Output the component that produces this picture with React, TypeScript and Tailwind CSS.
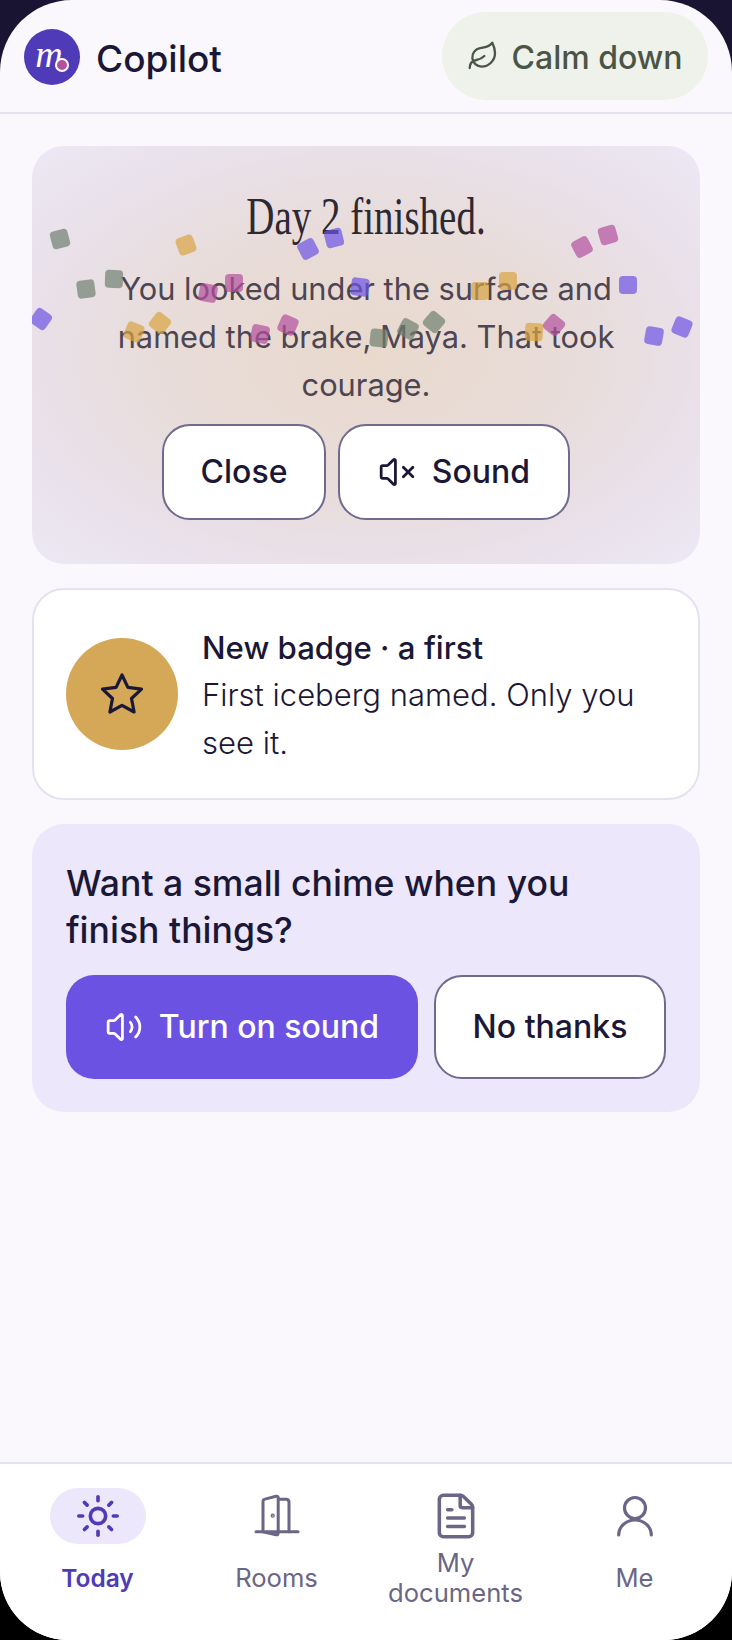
import { Leaf, FileText, Sun, Volume2, VolumeX } from 'lucide-react';

const confetti = [
  'left-[19px] top-[84px] rotate-[-15deg] bg-[#6f8070]',
  'left-[145px] top-[90px] rotate-[-20deg] bg-[#d9a441]',
  'left-[267px] top-[94px] rotate-[-28deg] bg-[#6c52e2]',
  'left-[293px] top-[83px] rotate-[-14deg] bg-[#6c52e2]',
  'left-[45px] top-[134px] rotate-[-8deg] bg-[#6f8070]',
  'left-[73px] top-[124px] rotate-[2deg] bg-[#6f8070]',
  'left-[167px] top-[138px] rotate-[10deg] bg-[#b4509e]',
  'left-[193px] top-[128px] rotate-[0deg] bg-[#b4509e]',
  'left-[319px] top-[132px] rotate-[8deg] bg-[#6c52e2]',
  'left-[0px] top-[164px] rotate-[35deg] bg-[#6c52e2]',
  'left-[93px] top-[177px] rotate-[22deg] bg-[#d9a441]',
  'left-[119px] top-[168px] rotate-[38deg] bg-[#d9a441]',
  'left-[219px] top-[179px] rotate-[12deg] bg-[#b4509e]',
  'left-[247px] top-[170px] rotate-[24deg] bg-[#b4509e]',
  'left-[338px] top-[183px] rotate-[6deg] bg-[#6f8070]',
  'left-[367px] top-[174px] rotate-[28deg] bg-[#6f8070]',
  'left-[393px] top-[167px] rotate-[40deg] bg-[#6f8070]',
  'left-[439px] top-[136px] rotate-[0deg] bg-[#d9a441]',
  'left-[467px] top-[126px] rotate-[0deg] bg-[#d9a441]',
  'left-[493px] top-[177px] rotate-[4deg] bg-[#d9a441]',
  'left-[513px] top-[170px] rotate-[40deg] bg-[#b4509e]',
  'left-[541px] top-[92px] rotate-[-28deg] bg-[#b4509e]',
  'left-[567px] top-[80px] rotate-[-16deg] bg-[#b4509e]',
  'left-[587px] top-[130px] rotate-[0deg] bg-[#6c52e2]',
  'left-[613px] top-[181px] rotate-[10deg] bg-[#6c52e2]',
  'left-[641px] top-[172px] rotate-[22deg] bg-[#6c52e2]',
];

const DoorIcon = () => (
  <svg width="48" height="48" viewBox="0 0 48 48" fill="none" stroke="currentColor" strokeWidth="3" strokeLinecap="round" strokeLinejoin="round">
    <path d="M3 39.7h42" />
    <path d="M10 39.7V9.5q0-2 2-2.4L23 4.3q2.2-.4 2.2 1.7v35q0 2.2-2.2 1.7z" />
    <path d="M26 7.3h7q3 0 3 3v29.4" />
    <circle cx="19.7" cy="23.7" r=".6" fill="currentColor" />
  </svg>
);

const StarIcon = () => (
  <svg width="48" height="48" viewBox="0 0 48 48" fill="none" stroke="currentColor" strokeWidth="3.2" strokeLinejoin="round">
    <path d="M24 5l5.9 12.4 13.6 1.7-10 9.4 2.6 13.5-12.1-6.6-12.1 6.6 2.6-13.5-10-9.4 13.6-1.7z" />
  </svg>
);

const UserIcon = () => (
  <svg width="48" height="48" viewBox="0 0 48 48" fill="none" stroke="currentColor" strokeWidth="3.2" strokeLinecap="round">
    <circle cx="24" cy="16" r="10.5" />
    <path d="M7.7 43a16.3 15 0 0 1 32.6 0" />
  </svg>
);

const outlineButton =
  'flex items-center justify-center rounded-[28px] border-2 border-[#6f6a8e] bg-white text-[32px] font-[550] text-[#1b1736]';

interface NavItemProps {
  label: string;
  active?: boolean;
  children: React.ReactNode;
}

const NavItem = ({ label, active, children }: NavItemProps) => (
  <div className={`flex flex-col items-center ${active ? 'text-[#4f3bb8]' : 'text-[#6b6685]'}`}>
    <div className={`flex h-[56px] w-[96px] items-center justify-center rounded-full ${active ? 'bg-[#ece7fb]' : ''}`}>
      {children}
    </div>
    <div className={`mt-[4px] flex h-[60px] w-[150px] items-center justify-center text-center leading-[30px] ${active ? 'text-[24.5px] font-semibold' : 'text-[25.6px] font-normal'}`}>
      <span>{label}</span>
    </div>
  </div>
);

export default function App() {
  return (
    <div className="h-[1640px] w-[732px] overflow-hidden bg-[linear-gradient(#1a1433_50%,#000_50%)] font-['Inter',sans-serif]">
      <div className="flex h-full flex-col overflow-hidden rounded-t-[72px] rounded-b-[68px] bg-[#faf8fd]">
        <header className="flex h-[114px] shrink-0 items-start justify-between border-b-2 border-[#e4e2f0] px-[24px] pt-[12px]">
          <div className="flex items-center gap-[16px] pt-[16px]">
            <div className="relative flex h-[56px] w-[56px] items-center justify-center rounded-full bg-[#4f3bb8]">
              <span className="font-['Liberation_Serif',serif] text-[38px] italic leading-none text-white -translate-y-[3px] -translate-x-[3px]">m</span>
              <span className="absolute left-[31px] top-[29px] h-[14px] w-[14px] rounded-full border-2 border-white bg-[#b4509e]" />
            </div>
            <span className="pt-[3px] text-[37px] font-[550] text-[#1b1736]">Copilot</span>
          </div>
          <div className="flex h-[88px] w-[266px] items-center justify-center gap-[12px] rounded-full bg-[#eef2ea] text-[32px] font-[450] text-[#4a5546]">
            <Leaf size={32} strokeWidth={1.75} />
            <span className="pt-[3px]">Calm down</span>
          </div>
        </header>

        <main className="flex flex-1 flex-col gap-[24px] px-[32px] pt-[32px]">
          <section className="relative h-[418px] overflow-hidden rounded-[32px] bg-[radial-gradient(ellipse_at_center,#e9d9cd_0%,#e8dcd8_40%,#e9e0e8_70%,#ece8f5_100%)] pt-[43px] text-center">
            <h1 className="h-[56px] scale-x-[.75] font-['Liberation_Serif',serif] text-[52px] leading-[56px] text-[#2e2833]">Day 2 finished.</h1>
            <p className="mx-auto mt-[20px] w-[540px] text-[30.8px] font-[380] leading-[48px] text-[#4d4552]">
              You looked under the surface and named the brake, Maya. That took courage.
            </p>
            <div className="mt-[15px] flex justify-center gap-[12px]">
              <button type="button" className={`${outlineButton} h-[96px] w-[164px]`}>Close</button>
              <button type="button" className={`${outlineButton} h-[96px] w-[232px] gap-[16px]`}>
                <VolumeX size={38} strokeWidth={1.75} />
                Sound
              </button>
            </div>
            {confetti.map((piece) => (
              <span key={piece} className={`absolute h-[18px] w-[18px] rounded-[4px] opacity-70 ${piece}`} />
            ))}
          </section>

          <section className="flex h-[212px] items-center gap-[24px] rounded-[32px] border-2 border-[#e4e2f0] bg-white pl-[32px] pr-[24px]">
            <div className="flex h-[112px] w-[112px] shrink-0 items-center justify-center rounded-full bg-[#d4a857] text-[#1b1736]">
              <StarIcon />
            </div>
            <div className="mt-[3px] text-[#1b1736]">
              <p className="text-[31.2px] font-[550] leading-[46px]">New badge · a first</p>
              <p className="text-[31px] font-[350] leading-[48px]">First iceberg named. Only you see it.</p>
            </div>
          </section>

          <section className="h-[288px] rounded-[32px] bg-[#ece7fb] px-[34px] pt-[36px]">
            <h2 className="w-[540px] text-[35.6px] font-[550] leading-[47px] text-[#1b1736]">Want a small chime when you finish things?</h2>
            <div className="mt-[21px] flex gap-[16px]">
              <button type="button" className="flex h-[104px] w-[352px] items-center justify-center gap-[16px] rounded-[28px] bg-[#6c52e2] text-[32px] font-[450] text-white">
                <Volume2 size={38} strokeWidth={1.75} />
                Turn on sound
              </button>
              <button type="button" className={`${outlineButton} h-[104px] w-[232px]`}>No thanks</button>
            </div>
          </section>
        </main>

        <nav className="grid h-[178px] shrink-0 grid-cols-4 border-t-2 border-[#e4e2f0] bg-white px-[8px] pt-[24px]">
          <NavItem label="Today" active><Sun size={46} strokeWidth={1.9} /></NavItem>
          <NavItem label="Rooms"><DoorIcon /></NavItem>
          <NavItem label="My documents"><FileText size={50} strokeWidth={1.7} /></NavItem>
          <NavItem label="Me"><UserIcon /></NavItem>
        </nav>
      </div>
    </div>
  );
}
